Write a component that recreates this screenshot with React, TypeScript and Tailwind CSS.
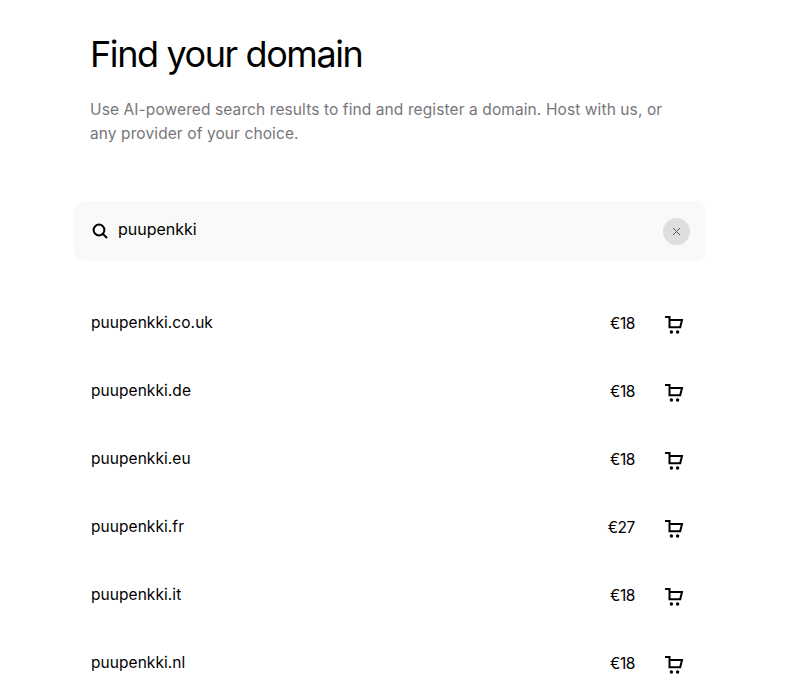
const rows = [
  ["puupenkki.co.uk", "€18"],
  ["puupenkki.de", "€18"],
  ["puupenkki.eu", "€18"],
  ["puupenkki.fr", "€27"],
  ["puupenkki.it", "€18"],
  ["puupenkki.nl", "€18"],
];

function Cart() {
  return (
    <svg width="20" height="20" viewBox="0 0 20 20" fill="none" stroke="#000" strokeWidth="2">
      <path d="M1 2H5.5V12.2H16.2L18 5H5.5" />
      <circle cx="7.4" cy="17" r="1.7" fill="#000" stroke="none" />
      <circle cx="13.6" cy="17" r="1.7" fill="#000" stroke="none" />
    </svg>
  );
}

export default function App() {
  return (
    <div className="h-[694px] w-[794px] overflow-hidden bg-white pl-[74px] font-['Inter',sans-serif] text-black">
      <div className="w-[632px]">
        <div className="pl-[16px] pr-[40px] pt-[31px]">
          <h1 className="text-[36px] leading-[46px] tracking-[-1.4px]">Find your domain</h1>
          <p className="mt-[21px] text-[15.5px] leading-[24px] tracking-[0.1px] text-[#77767a]">
            Use AI-powered search results to find and register a domain. Host with us, or any provider of your choice.
          </p>
        </div>
        <div className="mt-[55px] flex h-[60px] items-center rounded-[10px] bg-[#f9f9f9] pl-[18px] pr-[16px]">
          <svg width="16" height="16" viewBox="0 0 16 16" fill="none" stroke="#000" strokeWidth="2">
            <circle cx="7" cy="7" r="5.4" />
            <path d="M11 11L15 15" />
          </svg>
          <span className="ml-[10px] mt-[-4px] text-[16px]">puupenkki</span>
          <div className="ml-auto flex h-[27px] w-[27px] items-center justify-center rounded-full bg-[#dedede]">
            <svg width="9" height="9" viewBox="0 0 9 9" stroke="#555" strokeWidth="1">
              <path d="M1 1L8 8M8 1L1 8" />
            </svg>
          </div>
        </div>
        <div className="mt-[29px]">
          {rows.map(([name, price]) => (
            <div key={name} className="flex h-[68px] items-center pl-[17px] pr-[22px]">
              <span className="mt-[-2px] text-[15.5px] tracking-[0.06px]">{name}</span>
              <span className="ml-auto text-[15.5px] tracking-[-0.4px]">{price}</span>
              <span className="ml-[29px] mt-[2px] flex"><Cart /></span>
            </div>
          ))}
        </div>
      </div>
    </div>
  );
}
